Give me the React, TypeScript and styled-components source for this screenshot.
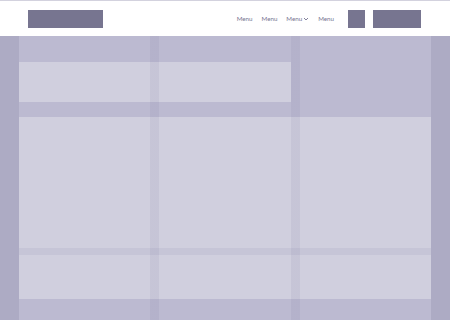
import React from 'react'
import styled, { createGlobalStyle } from 'styled-components'

const GlobalStyle = createGlobalStyle`
  html, body {
    margin: 0;
    padding: 0;
    background: #adabc4;
    font-family: Lato, 'Open Sans', 'Liberation Sans', sans-serif;
  }
`

const gutter = 'rgba(100, 95, 140, 0.09)'

const Page = styled.div`
  width: 450px;
  height: 320px;
  display: flex;
  flex-direction: column;
  overflow: hidden;
`

const Header = styled.header`
  height: 36px;
  box-sizing: border-box;
  flex-shrink: 0;
  background: #ffffff;
  border-top: 1px solid #d3d2de;
  display: flex;
  align-items: center;
  padding: 0 29px 0 28px;
`

const Block = styled.div<{ w: number }>`
  width: ${(p) => p.w}px;
  height: 18px;
  background: #777590;
`

const Nav = styled.nav`
  margin-left: auto;
  display: flex;
  align-items: center;
  gap: 9px;
  margin-right: 14px;
`

const MenuItem = styled.span`
  font-size: 6.2px;
  color: #75738f;
  display: flex;
  align-items: center;
  gap: 1px;
`

const Actions = styled.div`
  display: flex;
  gap: 8px;
`

const Body = styled.main`
  flex: 1;
  background: #adabc4;
  padding: 0 19px;
  display: flex;
`

const Container = styled.div`
  flex: 1;
  position: relative;
  background: #bcbad1;
  padding: 26px 0 21px;
  display: grid;
  grid-template-columns: repeat(3, 1fr);
  grid-template-rows: 40px 15px 1fr;
  column-gap: 9px;

  &::after {
    content: '';
    position: absolute;
    inset: 0;
    pointer-events: none;
    background: linear-gradient(
      to right,
      transparent calc((100% - 18px) / 3),
      ${gutter} 0,
      ${gutter} calc((100% - 18px) / 3 + 9px),
      transparent 0,
      transparent calc((100% - 18px) / 3 * 2 + 9px),
      ${gutter} 0,
      ${gutter} calc((100% - 18px) / 3 * 2 + 18px),
      transparent 0
    );
  }
`

const Panel = styled.div<{ span: number; row: number }>`
  grid-column: 1 / span ${(p) => p.span};
  grid-row: ${(p) => p.row};
  background: #d0cfde;
`

const Stack = styled.div`
  grid-column: 1 / span 3;
  grid-row: 3;
  display: flex;
  flex-direction: column;
`

const Section = styled.div<{ h?: number }>`
  background: #d0cfde;
  ${(p) => (p.h ? `height: ${p.h}px;` : 'flex: 1;')}
`

const Divider = styled.div`
  height: 7px;
  background: #c6c5d7;
`

const Chevron = () => (
  <svg width="6" height="6" viewBox="0 0 6 6" fill="none">
    <path d="M1 2l2 2 2-2" stroke="#75738f" strokeWidth="0.9" />
  </svg>
)

export default function App() {
  return (
    <>
      <GlobalStyle />
      <Page>
        <Header>
          <Block w={75} />
          <Nav>
            <MenuItem>Menu</MenuItem>
            <MenuItem>Menu</MenuItem>
            <MenuItem>
              Menu
              <Chevron />
            </MenuItem>
            <MenuItem>Menu</MenuItem>
          </Nav>
          <Actions>
            <Block w={17} />
            <Block w={48} />
          </Actions>
        </Header>
        <Body>
          <Container>
            <Panel span={2} row={1} />
            <Stack>
              <Section h={131} />
              <Divider />
              <Section />
            </Stack>
          </Container>
        </Body>
      </Page>
    </>
  )
}
